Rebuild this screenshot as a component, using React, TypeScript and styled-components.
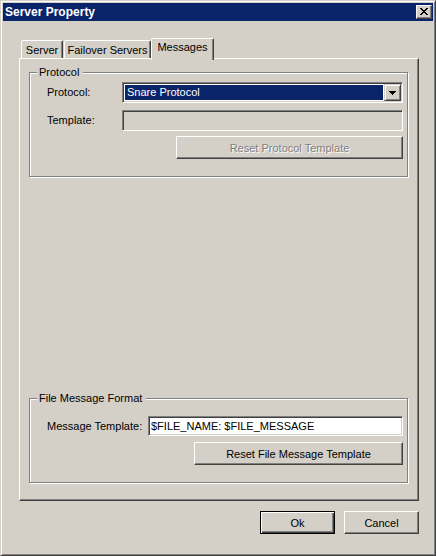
import React from 'react';
import styled, { createGlobalStyle, css } from 'styled-components';

const GlobalStyle = createGlobalStyle`
  html, body { margin: 0; padding: 0; background: #D4D0C8; }
  * { box-sizing: border-box; }
`;

const raised = css`
  border: 1px solid;
  border-color: #ffffff #404040 #404040 #ffffff;
  box-shadow: inset -1px -1px #808080;
`;

const sunken = css`
  border: 1px solid;
  border-color: #808080 #ffffff #ffffff #808080;
  box-shadow: inset 1px 1px #404040, inset -1px -1px #D4D0C8;
`;

const Window = styled.div`
  width: 436px;
  height: 556px;
  background: #D4D0C8;
  border: 1px solid;
  border-color: #D4D0C8 #404040 #404040 #D4D0C8;
  box-shadow: inset 1px 1px #ffffff, inset -1px -1px #808080;
  padding: 2px;
  display: flex;
  flex-direction: column;
  font-family: "Liberation Sans", Arial, sans-serif;
  font-size: 11px;
  color: #000;
`;

const TitleBar = styled.div`
  height: 18px;
  background: #0A246A;
  display: flex;
  align-items: center;
  justify-content: space-between;
  padding: 0 1px 0 2px;
`;

const Title = styled.span`
  color: #fff;
  font-weight: bold;
  font-size: 12px;
  line-height: 14px;
`;

const CloseButton = styled.div`
  width: 16px;
  height: 14px;
  background: #D4D0C8;
  border: 1px solid;
  border-color: #ffffff #404040 #404040 #ffffff;
  box-shadow: inset -1px -1px #808080;
  display: flex;
  align-items: center;
  justify-content: center;
  padding: 0 1px 1px 0;
`;

const Body = styled.div`
  flex: 1;
  display: flex;
  flex-direction: column;
  padding: 17px 14px 19px 16px;
`;

const TabStrip = styled.div`
  height: 20px;
  display: flex;
  align-items: flex-end;
  padding-left: 2px;
`;

const Tab = styled.div<{ $active?: boolean; $w: number; $ml?: number }>`
  width: ${p => p.$w}px;
  margin-left: ${p => p.$ml ?? 0}px;
  height: 18px;
  background: #D4D0C8;
  border: 1px solid;
  border-bottom: none;
  border-color: #ffffff #404040 transparent #ffffff;
  border-radius: 2px 2px 0 0;
  box-shadow: inset -1px 0 #808080;
  display: flex;
  align-items: center;
  justify-content: center;
  padding-top: 1px;
  line-height: 13px;
  white-space: nowrap;
  ${p =>
    p.$active &&
    css`
      height: 22px;
      margin-bottom: -2px;
      position: relative;
      z-index: 1;
      padding-top: 0;
      padding-bottom: 4px;
    `}
`;

const Panel = styled.div`
  flex: 1;
  ${raised}
  display: flex;
  flex-direction: column;
  justify-content: space-between;
  padding: 7px 10px 17px 9px;
`;

const GroupBox = styled.fieldset`
  margin: 0;
  padding: 0;
  min-width: 0;
  border: 1px solid #808080;
  box-shadow: inset 1px 1px #ffffff, 1px 1px #ffffff;
`;

const Legend = styled.legend`
  margin-left: 7px;
  padding: 0 4px 0 2px;
  line-height: 13px;
  height: 13px;
  background: #D4D0C8;
`;

const GroupBody = styled.div<{ $pt: number }>`
  display: flex;
  flex-direction: column;
  padding: ${p => p.$pt}px 4px 17px 17px;
`;

const FieldRow = styled.div<{ $label: number; $mt?: number }>`
  display: grid;
  grid-template-columns: ${p => p.$label}px 1fr;
  align-items: center;
  margin-top: ${p => p.$mt ?? 0}px;
`;

const Label = styled.span`
  line-height: 13px;
`;

const Combo = styled.div`
  height: 21px;
  ${sunken}
  background: #fff;
  padding: 1px;
  display: flex;
`;

const ComboValue = styled.div`
  flex: 1;
  margin: 1px;
  background: #0A246A;
  color: #fff;
  padding-left: 2px;
  line-height: 15px;
`;

const ComboButton = styled.div`
  width: 17px;
  height: 17px;
  background: #D4D0C8;
  border: 1px solid;
  border-color: #D4D0C8 #404040 #404040 #D4D0C8;
  box-shadow: inset 1px 1px #ffffff, inset -1px -1px #808080;
  display: flex;
  align-items: center;
  justify-content: center;
`;

const TextBox = styled.input<{ $h: number }>`
  height: ${p => p.$h}px;
  width: 100%;
  margin: 0;
  ${sunken}
  background: #fff;
  padding: 0 0 0 2px;
  font-family: "Liberation Sans", Arial, sans-serif;
  font-size: 11px;
  color: #000;
  outline: none;
  &:disabled {
    background: #D4D0C8;
  }
`;

const ButtonRow = styled.div<{ $mt: number }>`
  display: flex;
  justify-content: flex-end;
  margin-top: ${p => p.$mt}px;
`;

const Button = styled.button<{ $w: number; $default?: boolean }>`
  width: ${p => p.$w}px;
  height: 23px;
  margin: 0;
  padding: 0;
  background: #D4D0C8;
  font-family: "Liberation Sans", Arial, sans-serif;
  font-size: 11px;
  color: #000;
  border: 1px solid;
  border-color: #ffffff #404040 #404040 #ffffff;
  box-shadow: inset -1px -1px #808080, inset 1px 1px #D4D0C8;
  &:disabled {
    color: #808080;
    text-shadow: 1px 1px #ffffff;
  }
  ${p =>
    p.$default &&
    css`
      border-color: #000;
      box-shadow: inset 1px 1px #ffffff, inset -1px -1px #404040, inset -2px -2px #808080;
    `}
`;

const Footer = styled.div`
  display: flex;
  justify-content: flex-end;
  gap: 9px;
  margin-top: 10px;
`;

const CloseGlyph = () => (
  <svg width="8" height="7" viewBox="0 0 8 7" shapeRendering="crispEdges">
    <path
      fill="#000"
      d="M0 0h2v1H0zM6 0h2v1H6zM1 1h2v1H1zM5 1h2v1H5zM2 2h4v1H2zM3 3h2v1H3zM2 4h4v1H2zM1 5h2v1H1zM5 5h2v1H5zM0 6h2v1H0zM6 6h2v1H6z"
    />
  </svg>
);

const DownArrow = () => (
  <svg width="7" height="4" viewBox="0 0 7 4" shapeRendering="crispEdges">
    <path fill="#000" d="M0 0h7v1H0zM1 1h5v1H1zM2 2h3v1H2zM3 3h1v1H3z" />
  </svg>
);

export default function App() {
  return (
    <>
      <GlobalStyle />
      <Window>
        <TitleBar>
          <Title>Server Property</Title>
          <CloseButton>
            <CloseGlyph />
          </CloseButton>
        </TitleBar>
        <Body>
          <TabStrip>
            <Tab $w={42}>Server</Tab>
            <Tab $w={87} $ml={1}>Failover Servers</Tab>
            <Tab $w={63} $active>Messages</Tab>
          </TabStrip>
          <Panel>
            <GroupBox>
              <Legend>Protocol</Legend>
              <GroupBody $pt={3}>
                <FieldRow $label={75}>
                  <Label>Protocol:</Label>
                  <Combo>
                    <ComboValue>Snare Protocol</ComboValue>
                    <ComboButton>
                      <DownArrow />
                    </ComboButton>
                  </Combo>
                </FieldRow>
                <FieldRow $label={75} $mt={7}>
                  <Label>Template:</Label>
                  <TextBox $h={21} disabled defaultValue="" />
                </FieldRow>
                <ButtonRow $mt={5}>
                  <Button $w={227} disabled>Reset Protocol Template</Button>
                </ButtonRow>
              </GroupBody>
            </GroupBox>
            <GroupBox>
              <Legend>File Message Format</Legend>
              <GroupBody $pt={11}>
                <FieldRow $label={101}>
                  <Label>Message Template:</Label>
                  <TextBox $h={20} readOnly defaultValue="$FILE_NAME: $FILE_MESSAGE" />
                </FieldRow>
                <ButtonRow $mt={6}>
                  <Button $w={209}>Reset File Message Template</Button>
                </ButtonRow>
              </GroupBody>
            </GroupBox>
          </Panel>
          <Footer>
            <Button $w={75} $default>Ok</Button>
            <Button $w={75}>Cancel</Button>
          </Footer>
        </Body>
      </Window>
    </>
  );
}
